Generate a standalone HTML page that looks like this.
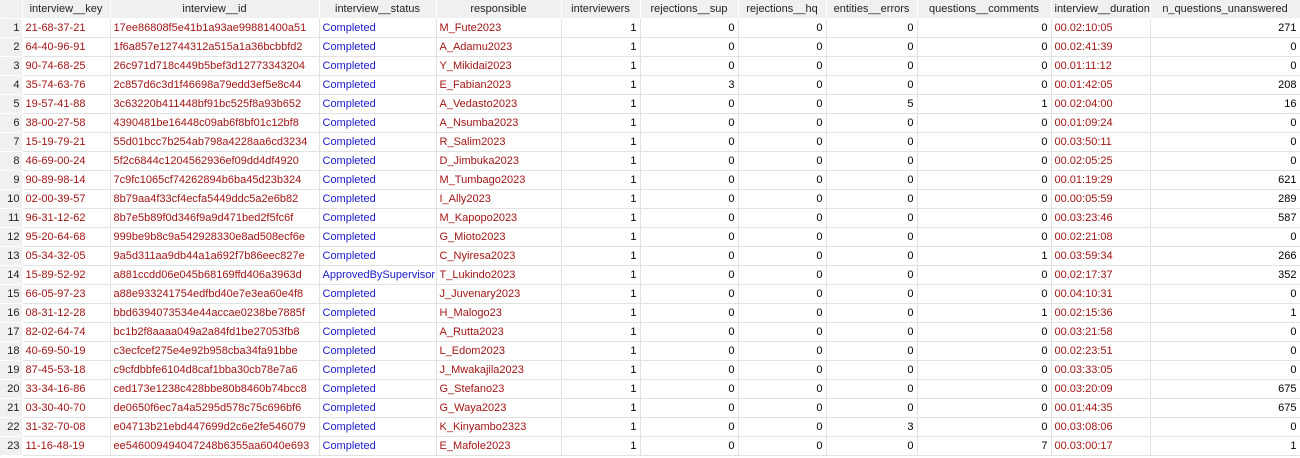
<!DOCTYPE html><html><head><style>
body{margin:0;background:#fff;width:1300px;height:458px;overflow:hidden;font-family:"Liberation Sans",Tahoma,sans-serif;font-size:11px}
table{border-collapse:collapse;table-layout:fixed;width:1300px}
td,th{height:18px;padding:0 3px;border-right:1px solid #e2e2e2;border-bottom:1px solid #e2e2e2;white-space:nowrap;overflow:hidden;line-height:18px}
th{background:#f0f0f0;font-weight:normal;color:#222;text-align:center;border-right:1px solid #fff;border-bottom:1px solid #fff}
td:first-child{background:#f0f0f0;text-align:right;color:#222;border-right:1px solid #fff;border-bottom:1px solid #fff;padding:0 2px}
.r{color:#a31515}.b{color:#1a1acc}.n{text-align:right;color:#000}
</style></head><body><table>
<colgroup><col style="width:22px"><col style="width:88px"><col style="width:209px"><col style="width:117px"><col style="width:125px"><col style="width:79px"><col style="width:98px"><col style="width:88px"><col style="width:91px"><col style="width:134px"><col style="width:99px"><col style="width:150px"></colgroup>
<tr><th></th><th>interview__key</th><th>interview__id</th><th>interview__status</th><th>responsible</th><th>interviewers</th><th>rejections__sup</th><th>rejections__hq</th><th>entities__errors</th><th>questions__comments</th><th>interview__duration</th><th>n_questions_unanswered</th></tr>
<tbody id="t"></tbody></table>
<script>
var d=[["21-68-37-21","17ee86808f5e41b1a93ae99881400a51","Completed","M_Fute2023",0,0,0,0,"00.02:10:05",271],
["64-40-96-91","1f6a857e12744312a515a1a36bcbbfd2","Completed","A_Adamu2023",0,0,0,0,"00.02:41:39",0],
["90-74-68-25","26c971d718c449b5bef3d12773343204","Completed","Y_Mikidai2023",0,0,0,0,"00.01:11:12",0],
["35-74-63-76","2c857d6c3d1f46698a79edd3ef5e8c44","Completed","E_Fabian2023",3,0,0,0,"00.01:42:05",208],
["19-57-41-88","3c63220b411448bf91bc525f8a93b652","Completed","A_Vedasto2023",0,0,5,1,"00.02:04:00",16],
["38-00-27-58","4390481be16448c09ab6f8bf01c12bf8","Completed","A_Nsumba2023",0,0,0,0,"00.01:09:24",0],
["15-19-79-21","55d01bcc7b254ab798a4228aa6cd3234","Completed","R_Salim2023",0,0,0,0,"00.03:50:11",0],
["46-69-00-24","5f2c6844c1204562936ef09dd4df4920","Completed","D_Jimbuka2023",0,0,0,0,"00.02:05:25",0],
["90-89-98-14","7c9fc1065cf74262894b6ba45d23b324","Completed","M_Tumbago2023",0,0,0,0,"00.01:19:29",621],
["02-00-39-57","8b79aa4f33cf4ecfa5449ddc5a2e6b82","Completed","I_Ally2023",0,0,0,0,"00.00:05:59",289],
["96-31-12-62","8b7e5b89f0d346f9a9d471bed2f5fc6f","Completed","M_Kapopo2023",0,0,0,0,"00.03:23:46",587],
["95-20-64-68","999be9b8c9a542928330e8ad508ecf6e","Completed","G_Mioto2023",0,0,0,0,"00.02:21:08",0],
["05-34-32-05","9a5d311aa9db44a1a692f7b86eec827e","Completed","C_Nyiresa2023",0,0,0,1,"00.03:59:34",266],
["15-89-52-92","a881ccdd06e045b68169ffd406a3963d","ApprovedBySupervisor","T_Lukindo2023",0,0,0,0,"00.02:17:37",352],
["66-05-97-23","a88e933241754edfbd40e7e3ea60e4f8","Completed","J_Juvenary2023",0,0,0,0,"00.04:10:31",0],
["08-31-12-28","bbd6394073534e44accae0238be7885f","Completed","H_Malogo23",0,0,0,1,"00.02:15:36",1],
["82-02-64-74","bc1b2f8aaaa049a2a84fd1be27053fb8","Completed","A_Rutta2023",0,0,0,0,"00.03:21:58",0],
["40-69-50-19","c3ecfcef275e4e92b958cba34fa91bbe","Completed","L_Edom2023",0,0,0,0,"00.02:23:51",0],
["87-45-53-18","c9cfdbbfe6104d8caf1bba30cb78e7a6","Completed","J_Mwakajila2023",0,0,0,0,"00.03:33:05",0],
["33-34-16-86","ced173e1238c428bbe80b8460b74bcc8","Completed","G_Stefano23",0,0,0,0,"00.03:20:09",675],
["03-30-40-70","de0650f6ec7a4a5295d578c75c696bf6","Completed","G_Waya2023",0,0,0,0,"00.01:44:35",675],
["31-32-70-08","e04713b21ebd447699d2c6e2fe546079","Completed","K_Kinyambo2323",0,0,3,0,"00.03:08:06",0],
["11-16-48-19","ee546009494047248b6355aa6040e693","Completed","E_Mafole2023",0,0,0,7,"00.03:00:17",1]];
var h="";d.forEach(function(r,i){h+="<tr><td>"+(i+1)+"</td><td class=r>"+r[0]+"</td><td class=r>"+r[1]+"</td><td class=b>"+r[2]+"</td><td class=r>"+r[3]+"</td><td class=n>1</td><td class=n>"+r[4]+"</td><td class=n>"+r[5]+"</td><td class=n>"+r[6]+"</td><td class=n>"+r[7]+"</td><td class=r>"+r[8]+"</td><td class=n>"+r[9]+"</td></tr>";});
document.getElementById("t").innerHTML=h;
</script></body></html>
